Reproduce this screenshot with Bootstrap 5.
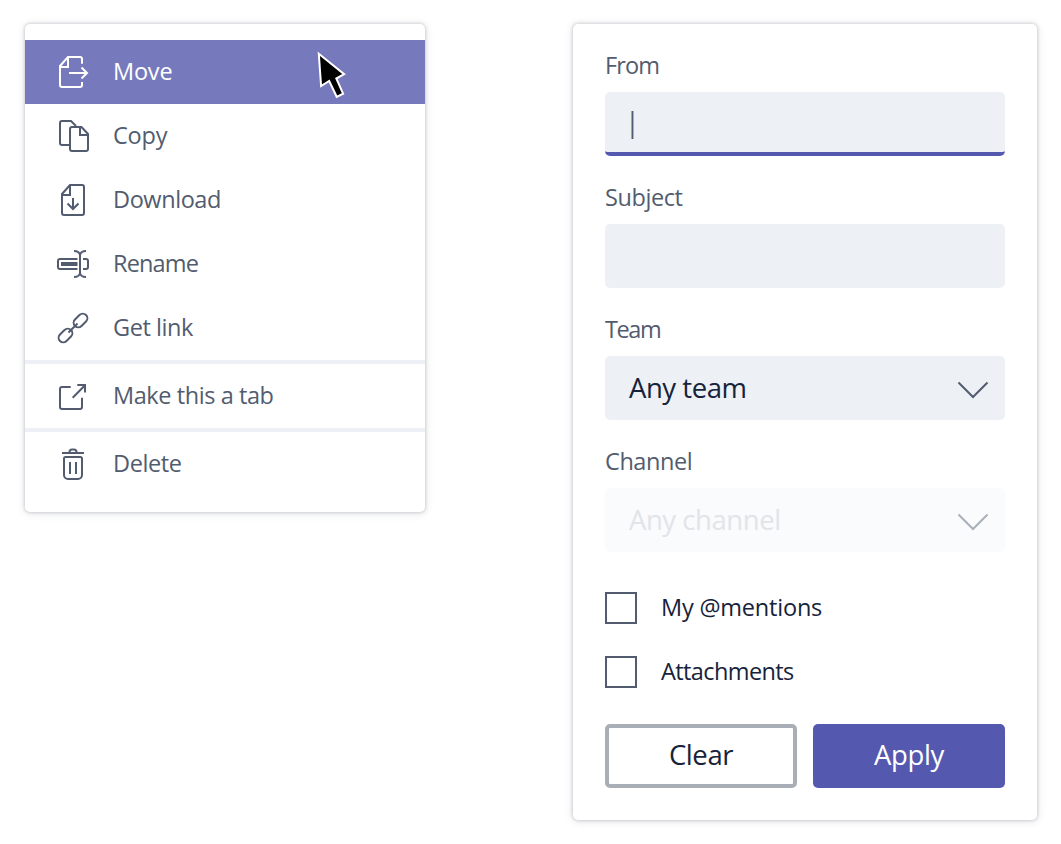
<!DOCTYPE html>
<html lang="en">
<head>
<meta charset="utf-8">
<meta name="viewport" content="width=device-width, initial-scale=1">
<title>File menu and filter panel</title>
<link href="https://cdn.jsdelivr.net/npm/bootstrap@5.3.0/dist/css/bootstrap.min.css" rel="stylesheet">
<style>
body{background:#fff;font-family:"Open Sans","Noto Sans",sans-serif;color:#16233a}
.stage{padding:24px 24px 0 25px;min-height:100vh}
.panel{background:#fff;border-radius:5px;box-shadow:0 0 3px 1px rgba(37,45,60,.16),0 1px 10px rgba(37,45,60,.13)}
.file-menu{width:400px;height:488px;padding:16px 0}
.menu-row{height:64px;padding:0 32px;gap:24px;color:#525c6e;font-size:23.5px;line-height:32px;letter-spacing:-.42px}
.menu-row span{margin-top:-2px}
.menu-row.current{background:#7779bd;color:#fff}
.menu-row svg{width:32px;height:32px;flex:none;fill:none;stroke:currentColor;stroke-width:2}
.rule{height:4px;background:#edf1f5}
.pointer{left:292px;top:27px;width:30px;height:50px}
.filter{width:464px;height:796px;padding:24px 32px 32px}
.field{margin-bottom:24px}
.field-label{height:36px;line-height:34px;margin-bottom:8px;font-size:23.5px;letter-spacing:-.42px;color:#525c6e}
.box,.box:focus{height:64px;border:0;border-radius:5px;background:#edf0f5;padding:0 16px 0 24px;font-size:27.5px;letter-spacing:-.45px;color:#16233a}
.box span{margin-top:-1px}
.box.active-box{border-bottom:4px solid #5558af;padding-left:20px;color:#525c6e;font-size:27px}
.box svg{width:32px;height:18px;fill:none;stroke:#525c6e;stroke-width:2;margin-top:3px}
.box.off{background:#fafbfd;color:#e3e4e7}
.box.off svg{stroke:#a9b0b9}
.checks{padding-top:16px;gap:32px;margin-bottom:36px}
.tick{height:32px;gap:24px;font-size:23.5px;letter-spacing:-.6px}
.tick input{appearance:none;width:32px;height:32px;margin:0;border:2px solid #525c6e;background:#fff;flex:none}
.act{flex:0 0 192px;height:64px;border-radius:5px;font-size:27.5px;letter-spacing:-.4px;padding:0 0 2px}
.act-clear{border:4px solid #a9aeb7;background:#fff;color:#16233a}
.act-apply{border:0;background:#5558af;color:#fff}
.snug{letter-spacing:-.85px}
.tight{letter-spacing:-1.4px}
.wide{letter-spacing:-.2px}
</style>
</head>
<body>
<main class="stage d-flex justify-content-between align-items-start">
  <nav class="panel file-menu d-flex flex-column position-relative">
    <a class="menu-row current d-flex align-items-center text-decoration-none"><svg viewBox="0 0 32 32"><path d="M25 7.800V3a2 2 0 0 0-2-2H11L3 10v19a2 2 0 0 0 2 2h18a2 2 0 0 0 2-2v-3M11 1v10H3M12 17h18M24.500 11.500l5.500 5.500-5.500 5.500"/></svg><span class="wide">Move</span></a>
    <a class="menu-row d-flex align-items-center text-decoration-none"><svg viewBox="0 0 32 32"><path d="M12 25H5a2 2 0 0 1-2-2V3a2 2 0 0 1 2-2h9l5 5M15 7h9.500l6.500 7v15a2 2 0 0 1-2 2H15a2 2 0 0 1-2-2V9a2 2 0 0 1 2-2zM23 7v8h8"/></svg><span class="wide">Copy</span></a>
    <a class="menu-row d-flex align-items-center text-decoration-none"><svg viewBox="0 0 32 32"><path d="M13 1h12a2 2 0 0 1 2 2v26a2 2 0 0 1-2 2H7a2 2 0 0 1-2-2V10zM13 1v10H5M16 14v11M10.500 19.500l5.500 5.500 5.500-5.500"/></svg><span>Download</span></a>
    <a class="menu-row d-flex align-items-center text-decoration-none"><svg viewBox="0 0 32 32"><path d="M20.500 11H3a2 2 0 0 0-2 2v6a2 2 0 0 0 2 2h17.500M26 11h3a2 2 0 0 1 2 2v6a2 2 0 0 1-2 2h-3M17 3c3 0 6 1.500 6 4.500C23 4.500 26 3 29 3M23 7v18M17 29c3 0 6-1.500 6-4.500 0 3 3 4.500 6 4.500"/><path d="M4 16h16.500" stroke-width="4"/></svg><span class="snug">Rename</span></a>
    <a class="menu-row d-flex align-items-center text-decoration-none"><svg viewBox="0 0 32 32"><g transform="rotate(-45 23.5 8.500)"><rect x="15.700" y="3.900" width="15.600" height="9.200" rx="4.600"/></g><g transform="rotate(-45 8.500 23.500)"><rect x=".7" y="18.900" width="15.600" height="9.200" rx="4.600"/></g><path d="M11.500 20.500l9-9"/></svg><span>Get link</span></a>
    <div class="rule"></div>
    <a class="menu-row d-flex align-items-center text-decoration-none"><svg viewBox="0 0 32 32"><path d="M13.700 7H5a2 2 0 0 0-2 2v18a2 2 0 0 0 2 2h18a2 2 0 0 0 2-2v-9.300M15.700 17.700L28 5.200M20.300 5H28v7.500"/></svg><span>Make this a tab</span></a>
    <div class="rule"></div>
    <a class="menu-row d-flex align-items-center text-decoration-none"><svg viewBox="0 0 32 32"><path d="M5 5h22M12.500 5V4a2.500 2.500 0 0 1 2.500-2.500h2a2.500 2.500 0 0 1 2.500 2.500v1M8.500 9h15A1.500 1.500 0 0 1 25 10.500V27a4 4 0 0 1-4 4H11a4 4 0 0 1-4-4V10.500A1.500 1.500 0 0 1 8.500 9zM13 14v12M19 14v12"/></svg><span>Delete</span></a>
    <svg class="pointer position-absolute" viewBox="0 0 30 50"><path d="M1.800 2.800l25.300 20.400-7.800 4.300 6.800 15.200-6.400 3.100-7.500-15.800-8.100 5z" fill="#000" stroke="#fff" stroke-width="2"/></svg>
  </nav>
  <form class="panel filter">
    <div class="field"><div class="field-label snug">From</div><div class="box active-box d-flex align-items-center">|</div></div>
    <div class="field"><div class="field-label">Subject</div><input class="box form-control shadow-none" type="text" aria-label="Subject"></div>
    <div class="field"><div class="field-label tight">Team</div><div class="box d-flex align-items-center justify-content-between"><span>Any team</span><svg viewBox="0 0 32 18"><path d="M1.500 1.500L16 16 30.500 1.500"/></svg></div></div>
    <div class="field"><div class="field-label">Channel</div><div class="box off d-flex align-items-center justify-content-between"><span>Any channel</span><svg viewBox="0 0 32 18"><path d="M1.500 1.500L16 16 30.500 1.500"/></svg></div></div>
    <div class="checks d-flex flex-column">
      <label class="tick d-flex align-items-center"><input type="checkbox"><span class="wide">My @mentions</span></label>
      <label class="tick d-flex align-items-center"><input type="checkbox"><span>Attachments</span></label>
    </div>
    <div class="d-flex gap-3"><button type="button" class="btn act act-clear">Clear</button><button type="button" class="btn act act-apply">Apply</button></div>
  </form>
</main>
<script src="https://cdn.jsdelivr.net/npm/bootstrap@5.3.0/dist/js/bootstrap.bundle.min.js"></script>
</body>
</html>
